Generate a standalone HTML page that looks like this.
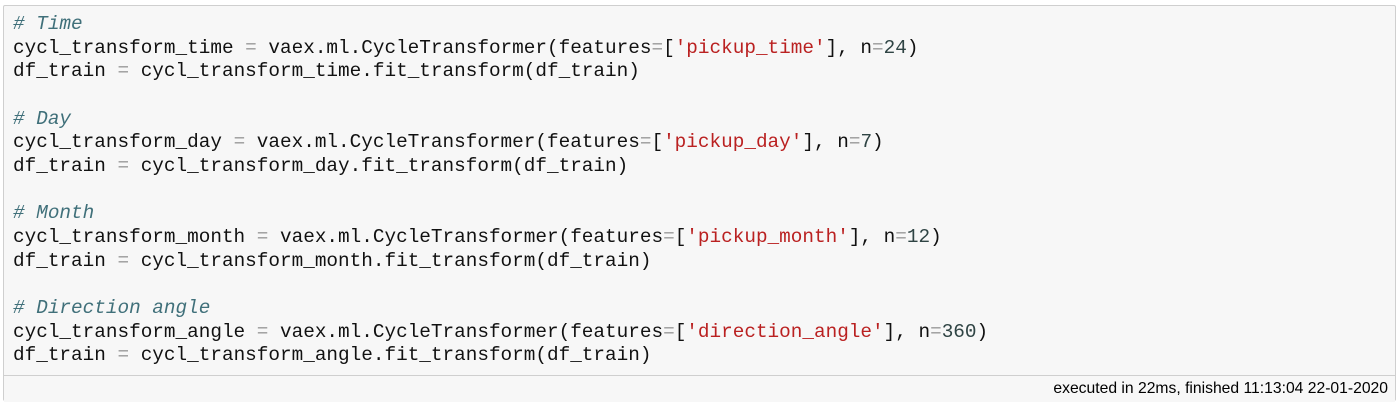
<!DOCTYPE html>
<html><head><meta charset="utf-8"><style>
html,body{margin:0;padding:0;background:#fff;width:1400px;height:405px;overflow:hidden}
.cell{position:absolute;left:3px;top:5px;width:1393px;height:396px;border:1px solid #cfcfcf;border-radius:2px;background:#f7f7f7;box-sizing:border-box}
pre{margin:0;position:absolute;left:9px;top:7px;font-family:"Liberation Mono",monospace;font-size:19.35px;line-height:23.65px;color:#111}
.c{color:#40707a;font-style:italic}
.s{color:#ba2121}
.o{color:#999}
.n{color:#2f4444}
.foot{position:absolute;left:0;right:0;top:369px;height:26px;border-top:1px solid #cfcfcf;background:#f7f7f7}
.foot span{position:absolute;right:7px;top:4px;font-family:"Liberation Sans",sans-serif;font-size:15.7px;color:#000}
</style></head><body>
<div class="cell">
<pre><span class="c"># Time</span>
cycl_transform_time <span class="o">=</span> vaex.ml.CycleTransformer(features<span class="o">=</span>[<span class="s">'pickup_time'</span>], n<span class="o">=</span><span class="n">24</span>)
df_train <span class="o">=</span> cycl_transform_time.fit_transform(df_train)

<span class="c"># Day</span>
cycl_transform_day <span class="o">=</span> vaex.ml.CycleTransformer(features<span class="o">=</span>[<span class="s">'pickup_day'</span>], n<span class="o">=</span><span class="n">7</span>)
df_train <span class="o">=</span> cycl_transform_day.fit_transform(df_train)

<span class="c"># Month</span>
cycl_transform_month <span class="o">=</span> vaex.ml.CycleTransformer(features<span class="o">=</span>[<span class="s">'pickup_month'</span>], n<span class="o">=</span><span class="n">12</span>)
df_train <span class="o">=</span> cycl_transform_month.fit_transform(df_train)

<span class="c"># Direction angle</span>
cycl_transform_angle <span class="o">=</span> vaex.ml.CycleTransformer(features<span class="o">=</span>[<span class="s">'direction_angle'</span>], n<span class="o">=</span><span class="n">360</span>)
df_train <span class="o">=</span> cycl_transform_angle.fit_transform(df_train)</pre>
<div class="foot"><span>executed in 22ms, finished 11:13:04 22-01-2020</span></div>
</div>
</body></html>
